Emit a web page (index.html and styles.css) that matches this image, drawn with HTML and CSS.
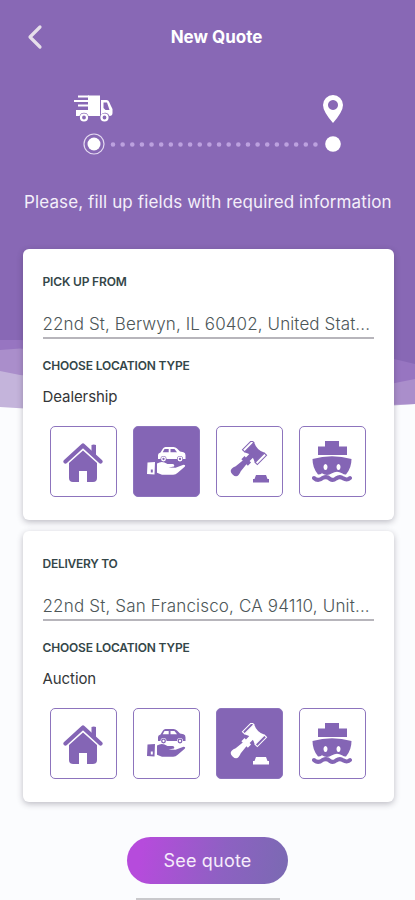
FILE: index.html
```html
<!DOCTYPE html>
<html lang="en">
<head>
<meta charset="utf-8">
<meta name="viewport" content="width=device-width, initial-scale=1">
<title>New Quote</title>
<link rel="stylesheet" href="styles.css">
</head>
<body>
<svg class="defs" width="0" height="0" aria-hidden="true">
  <symbol id="house" viewBox="0 0 40 42">
    <path d="M2.500 20.500 20 4.500 37.500 20.500" fill="none" stroke="currentColor" stroke-width="4.200" stroke-linecap="round" stroke-linejoin="round"/>
    <path d="M28.500 4q2.250-1.200 4.500 0v13l-4.500-4.500z" fill="currentColor"/>
    <path d="M20 9.500 34 22v15q0 4-4 4h-6V30h-8v11h-6q-4 0-4-4V22z" fill="currentColor"/>
  </symbol>
  <symbol id="dealer" viewBox="0 0 40 40">
    <path fill="currentColor" fill-rule="evenodd" d="M12 17v-4q0-2 2.500-2.500l2.500-4q.8-1.500 2.500-1.500h8q2 0 3.500 1.500l3 3 3.500.8q2 .7 2 3V17h-2.500a3 3 0 0 0-6 0H20.500a3 3 0 0 0-6 0zM18.500 7l-1.800 3.200h6V7zM24.500 7v3.200h6.500L28.500 7z"/>
    <g fill="none" stroke="currentColor" stroke-width="1.300"><circle cx="17.500" cy="17" r="1.800"/><circle cx="34" cy="17" r="1.800"/></g>
    <path fill="currentColor" fill-rule="evenodd" d="M1.500 20.500 9 20 8.500 32.500 1 32zM4.800 27.500v3h2v-3z"/>
    <path fill="currentColor" d="M11 21.500q4-2.500 7.500-1l3 1.500h5q2.500.5 1.500 2.500l-5.500 1 7 .2 8-3q2.500 0 1.200 2l-7 6q-2 2-4.500 2H16l-5-2z"/>
  </symbol>
  <symbol id="gavel" viewBox="0 0 40 42">
    <g transform="translate(25.500 11.500) rotate(45)" fill="currentColor">
      <path d="M-10.500-6.500h3v13h-3zM7.500-6.500h3v13h-3z" fill="none" stroke="currentColor" stroke-width="1.100"/>
      <path d="M-7.500-7Q0-3 7.500-7V7Q3 4.500 0 4.500T-7.500 7z"/>
      <path d="M-2.600 3h5.200v6.500h2v4.500h-2l1 9q3.400 8-3.600 8t-3.600-8l1-9h-2V9.500h2z"/>
    </g>
    <path d="M27 34h10l1.500 4H40v3.500H24V38h1.500z" fill="currentColor"/>
  </symbol>
  <symbol id="ship" viewBox="0 0 40 42">
    <path fill="currentColor" d="M13 0h14v5.500h8V14H6V5.500h7z"/>
    <path fill="currentColor" fill-rule="evenodd" d="M.5 18Q20 12.500 39.500 18q0 9-5.500 15.500-2 .2-4-1.200-5-3.300-10 0t-10 0Q8 33.700 6 33.500.5 27 .5 18zM13.500 23a2 3 0 1 0 .01 0zM26.500 23a2 3 0 1 0 .01 0z"/>
    <path d="M2 37q4 4 9-.2 4-1.800 7 1.200 3 2 6-.5 4-2.700 7-.2 4 2.400 7-.3" fill="none" stroke="currentColor" stroke-width="4" stroke-linecap="round"/>
  </symbol>
</svg>
<main class="screen">
  <svg class="backdrop" viewBox="0 0 415 410" aria-hidden="true">
    <path d="M0 0H415V404Q210 420 0 407z" fill="#c4b4db"/>
    <path d="M0 0H415V404L330 407 20 375 0 371z" fill="#aa8ecb"/>
    <path d="M0 0H415V379L390 384 20 348.500 0 350z" fill="#9775c1"/>
    <path d="M0 0H415V364L390 358 20 340H0z" fill="#8868b5"/>
  </svg>
  <header class="topbar">
    <svg class="back" viewBox="0 0 16 26"><path d="M13 3 3 13l10 10" fill="none" stroke="currentColor" stroke-width="3.200" stroke-linecap="round" stroke-linejoin="round"/></svg>
    <h1 class="title">New Quote</h1>
  </header>
  <svg class="route" viewBox="0 0 270 66" aria-label="Route progress">
    <g fill="#fff">
      <path d="M15 1.500h12V22H15.500a4.700 4.700 0 0 0-9 0H3v-6h12z"/>
      <path fill-rule="evenodd" d="M28 6h5.500q2 0 2.700 2l1.800 4 1.500 3v4q0 3-3 3a4.700 4.700 0 0 0-8.500-1zM30.500 8.500V14l2 2h4l-2.500-7.500z"/>
      <path d="M5 2.500h11M1 7h15M5 11.500h11" fill="none" stroke="#fff" stroke-width="1.900"/>
      <g fill="none" stroke="#fff" stroke-width="2.200"><circle cx="11" cy="23.500" r="3"/><circle cx="31.500" cy="23.500" r="3"/></g>
      <path fill-rule="evenodd" d="M260 1a10 10 0 0 1 10 10q0 6.500-10 18-10-11.500-10-18a10 10 0 0 1 10-10zm0 5a5 5 0 1 0 .01 0z"/>
      <circle cx="21" cy="50" r="6.500"/><circle cx="260" cy="50" r="7.800"/>
    </g>
    <circle cx="21" cy="50" r="10" fill="none" stroke="#e4daf1" stroke-width="1.200"/>
    <path d="M40 50.500H243" stroke="#bca1df" stroke-width="4.600" stroke-linecap="round" stroke-dasharray="0 9.640"/>
  </svg>
  <p class="hint">Please, fill up fields with required information</p>

  <section class="card">
    <h2 class="label pick">PICK UP FROM</h2>
    <div class="address"><span class="addr-one">22nd St, Berwyn, IL 60402, United Stat...</span></div>
    <h3 class="label choose">CHOOSE LOCATION TYPE</h3>
    <p class="kind dealership">Dealership</p>
    <div class="options">
      <button class="option" aria-label="Residence"><svg><use href="#house"/></svg></button>
      <button class="option selected" aria-label="Dealership"><svg><use href="#dealer"/></svg></button>
      <button class="option" aria-label="Auction"><svg><use href="#gavel"/></svg></button>
      <button class="option" aria-label="Port"><svg><use href="#ship"/></svg></button>
    </div>
  </section>

  <section class="card">
    <h2 class="label deliver">DELIVERY TO</h2>
    <div class="address"><span class="addr-two">22nd St, San Francisco, CA 94110, Unit...</span></div>
    <h3 class="label choose">CHOOSE LOCATION TYPE</h3>
    <p class="kind auction">Auction</p>
    <div class="options">
      <button class="option" aria-label="Residence"><svg><use href="#house"/></svg></button>
      <button class="option" aria-label="Dealership"><svg><use href="#dealer"/></svg></button>
      <button class="option selected" aria-label="Auction"><svg><use href="#gavel"/></svg></button>
      <button class="option" aria-label="Port"><svg><use href="#ship"/></svg></button>
    </div>
  </section>

  <button class="submit">See quote</button>
  <div class="home-bar"></div>
</main>
</body>
</html>
```
FILE: styles.css
```css
* { box-sizing: border-box; margin: 0; padding: 0; }
body { font-family: Inter, "Open Sans", sans-serif; background: #fbfcfe; }
button { font: inherit; border: 0; background: none; }
.defs { position: absolute; }
.screen {
  position: relative;
  width: 415px;
  height: 900px;
  overflow: hidden;
  display: flex;
  flex-direction: column;
}
.backdrop { position: absolute; top: 0; left: 0; width: 415px; height: 410px; z-index: -1; }
.topbar {
  height: 74px;
  display: grid;
  grid-template-columns: 44px 1fr 44px;
  align-items: center;
  padding: 0 9px 0 27px;
  color: #fff;
}
.back { width: 16px; height: 26px; color: #e6dfea; }
.title { font-size: 17px; font-weight: 650; text-align: center; white-space: nowrap; }
.route { width: 270px; height: 66px; margin: 20px 0 0 73px; flex: none; }
.hint {
  margin-top: 29px;
  height: 26px;
  line-height: 26px;
  padding-left: 24px;
  color: #f4effa;
  font-size: 17px;
  letter-spacing: .12px;
  white-space: nowrap;
}
.card {
  width: 371px;
  height: 271px;
  margin: 34px 0 0 22.5px;
  padding: 25px 20px 0;
  border-radius: 6px;
  background: #fff;
  box-shadow: 0 2px 6px rgba(45, 40, 60, .3);
  flex: none;
}
.card + .card { margin-top: 11px; }
.label { font-size: 12px; line-height: 16px; font-weight: 600; color: #344648; letter-spacing: -.17px; white-space: nowrap; }
.deliver { letter-spacing: -.27px; }
.address {
  height: 31px;
  margin-top: 18px;
  padding-top: 3px;
  border-bottom: 2px solid #b7b5bb;
  font-size: 17px;
  font-weight: 300;
  line-height: 26px;
  color: #4c5658;
  white-space: nowrap;
}
.addr-one { letter-spacing: .11px; }
.addr-two { letter-spacing: .17px; }
.choose { margin-top: 19px; }
.kind { margin-top: 12px; line-height: 22px; font-size: 15px; letter-spacing: -.08px; color: #343638; }
.options { display: grid; grid-template-columns: repeat(4, 67px); gap: 16px; padding-left: 7px; margin-top: 18px; }
.option {
  height: 71px;
  display: grid;
  place-items: center;
  border: 1px solid #8d74bd;
  border-radius: 5px;
  color: #8465b5;
}
.option svg { width: 40px; height: 42px; }
.option.selected { background: #8465b5; color: #fff; }
.submit {
  width: 161px;
  height: 47px;
  margin: 35px 0 0 127px;
  border-radius: 24px;
  background: linear-gradient(100deg, #b64bdc 10%, #8d61c2 60%, #7a6ab2);
  color: #f6ecfb;
  font-size: 18px;
  letter-spacing: .2px;
  flex: none;
}
.home-bar { width: 144px; height: 2px; margin: 14px 0 0 136px; background: #c9c9cc; flex: none; }
```
